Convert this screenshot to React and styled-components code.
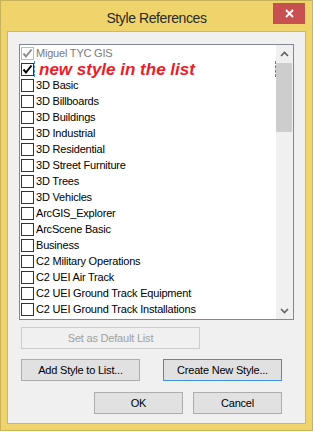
import React from "react";
import styled, { createGlobalStyle } from "styled-components";

const GlobalStyle = createGlobalStyle`
  html, body {
    margin: 0;
    padding: 0;
    background: #ffffff;
  }
  body {
    font-family: "Liberation Sans", Arial, sans-serif;
  }
`;

const Window = styled.div`
  width: 313px;
  height: 431px;
  box-sizing: border-box;
  border: 1px solid #c9b25c;
  background: #efd46b;
  display: flex;
  flex-direction: column;
  padding: 0 6px 6px 6px;
`;

const TitleBar = styled.div`
  height: 30px;
  display: grid;
  grid-template-columns: 1fr auto 1fr;
  margin: 0 -6px;
`;

const Title = styled.div`
  grid-column: 2;
  font-family: "Liberation Sans", Arial, sans-serif;
  font-size: 14px;
  letter-spacing: -0.4px;
  color: #2a2a2a;
  padding-top: 9px;
`;

const CloseButton = styled.div`
  grid-column: 3;
  justify-self: end;
  width: 32px;
  height: 21px;
  margin-top: 2px;
  margin-right: 7px;
  background: #c75050;
  display: flex;
  align-items: center;
  justify-content: center;
`;

const Client = styled.div`
  flex: 1;
  border: 1px solid #d2b85a;
  background: #f0f0f0;
  display: flex;
  flex-direction: column;
  padding: 12px 11px 0 11px;
`;

const ListBox = styled.div`
  height: 276px;
  box-sizing: border-box;
  border: 1px solid #828790;
  background: #ffffff;
  display: flex;
  overflow: hidden;
`;

const Items = styled.div`
  flex: 1;
  display: flex;
  flex-direction: column;
  padding-left: 1px;
`;

const Row = styled.div`
  height: 16px;
  flex-shrink: 0;
  display: flex;
  align-items: center;
`;

const Box = styled.div`
  width: 13px;
  height: 13px;
  box-sizing: border-box;
  border: 1px solid ${(p) => (p.disabled ? "#bcbcbc" : "#333333")};
  background: #ffffff;
  display: flex;
  align-items: center;
  justify-content: center;
  flex-shrink: 0;
`;

const Label = styled.div`
  flex: 1;
  height: 16px;
  box-sizing: border-box;
  border-left: 1px ${(p) => (p.focused ? "dashed #2f8ae8" : "solid transparent")};
  border-right: 1px ${(p) => (p.focused ? "dashed #2f8ae8" : "solid transparent")};
  padding-left: 1px;
  font-size: 11px;
  letter-spacing: -0.2px;
  line-height: 16px;
  white-space: nowrap;
  color: ${(p) => (p.disabled ? "#7a7a7a" : "#000000")};
  overflow: visible;
`;

const Note = styled.span`
  display: inline-block;
  margin-left: 3px;
  font-size: 17px;
  font-weight: bold;
  font-style: italic;
  letter-spacing: 0;
  color: #e8202a;
  line-height: 16px;
  position: relative;
  top: 1px;
`;

const ScrollBar = styled.div`
  width: 17px;
  background: #f0f0f0;
  display: flex;
  flex-direction: column;
`;

const Arrow = styled.div`
  height: 17px;
  display: flex;
  align-items: center;
  justify-content: center;
  flex-shrink: 0;
`;

const Track = styled.div`
  flex: 1;
  padding: 1px 1px 0 0;
`;

const Thumb = styled.div`
  height: 69px;
  background: #cdcdcd;
`;

const Button = styled.div`
  height: 22px;
  width: ${(p) => p.w}px;
  box-sizing: border-box;
  border: 1px solid ${(p) => (p.disabled ? "#cccccc" : p.primary ? "#3c8fdc" : "#adadad")};
  background: ${(p) => (p.disabled ? "#f0f0f0" : "#e1e1e1")};
  color: ${(p) => (p.disabled ? "#a0a0a0" : "#000000")};
  font-size: 11px;
  letter-spacing: -0.2px;
  display: flex;
  align-items: center;
  justify-content: center;
  white-space: nowrap;
`;

const ButtonRow = styled.div`
  display: flex;
  justify-content: ${(p) => p.justify || "space-between"};
  gap: ${(p) => p.gap || 0}px;
  margin-top: ${(p) => p.top}px;
  padding: 0 12px 0 2px;
`;

const items = [
  "3D Basic",
  "3D Billboards",
  "3D Buildings",
  "3D Industrial",
  "3D Residential",
  "3D Street Furniture",
  "3D Trees",
  "3D Vehicles",
  "ArcGIS_Explorer",
  "ArcScene Basic",
  "Business",
  "C2 Military Operations",
  "C2 UEI Air Track",
  "C2 UEI Ground Track Equipment",
  "C2 UEI Ground Track Installations",
];

function Check({ color }) {
  return (
    <svg width="11" height="11" viewBox="0 0 11 11">
      <polyline points="1.5,5.5 4,8.5 9.5,1.5" fill="none" stroke={color} strokeWidth="2" />
    </svg>
  );
}

function Chevron({ down }) {
  return (
    <svg width="9" height="6" viewBox="0 0 9 6">
      <polyline
        points={down ? "1,1 4.5,4.5 8,1" : "1,5 4.5,1.5 8,5"}
        fill="none"
        stroke="#606060"
        strokeWidth="1.6"
      />
    </svg>
  );
}

export default function App() {
  return (
    <>
      <GlobalStyle />
      <Window>
        <TitleBar>
          <Title>Style References</Title>
          <CloseButton>
            <svg width="9" height="9" viewBox="0 0 9 9">
              <path d="M1 1 L8 8 M8 1 L1 8" stroke="#ffffff" strokeWidth="1.8" />
            </svg>
          </CloseButton>
        </TitleBar>
        <Client>
          <ListBox>
            <Items>
              <Row>
                <Box disabled>
                  <Check color="#8c8c8c" />
                </Box>
                <Label disabled>Miguel TYC GIS</Label>
              </Row>
              <Row>
                <Box>
                  <Check color="#000000" />
                </Box>
                <Label focused>
                  <Note>new style in the list</Note>
                </Label>
              </Row>
              {items.map((name) => (
                <Row key={name}>
                  <Box />
                  <Label>{name}</Label>
                </Row>
              ))}
            </Items>
            <ScrollBar>
              <Arrow>
                <Chevron />
              </Arrow>
              <Track>
                <Thumb />
              </Track>
              <Arrow>
                <Chevron down />
              </Arrow>
            </ScrollBar>
          </ListBox>
          <ButtonRow top={7} justify="flex-start">
            <Button w={179} disabled>
              Set as Default List
            </Button>
          </ButtonRow>
          <ButtonRow top={10}>
            <Button w={119}>Add Style to List...</Button>
            <Button w={119} primary>
              Create New Style...
            </Button>
          </ButtonRow>
          <ButtonRow top={11} justify="flex-end" gap={10}>
            <Button w={89}>OK</Button>
            <Button w={89}>Cancel</Button>
          </ButtonRow>
        </Client>
      </Window>
    </>
  );
}
